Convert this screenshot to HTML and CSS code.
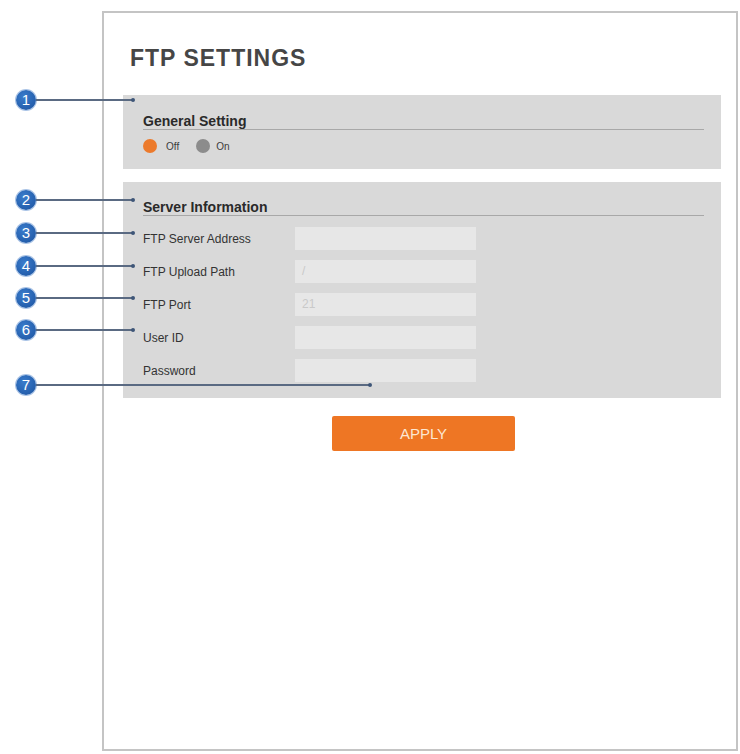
FILE: index.html
```html
<!DOCTYPE html>
<html lang="en">
<head>
<meta charset="utf-8">
<title>FTP Settings</title>
<link rel="stylesheet" href="styles.css">
</head>
<body>
<div class="frame">
  <h1 class="title">FTP SETTINGS</h1>
  <section class="panel general">
    <h2 class="heading">General Setting</h2>
    <div class="radios">
      <span class="radio checked"></span><span class="rlabel off">Off</span>
      <span class="radio"></span><span class="rlabel">On</span>
    </div>
  </section>
  <section class="panel server">
    <h2 class="heading">Server Information</h2>
    <div class="rows">
      <div class="row"><span class="label">FTP Server Address</span><div class="input"></div></div>
      <div class="row"><span class="label">FTP Upload Path</span><div class="input">/</div></div>
      <div class="row"><span class="label">FTP Port</span><div class="input">21</div></div>
      <div class="row"><span class="label">User ID</span><div class="input"></div></div>
      <div class="row"><span class="label">Password</span><div class="input"></div></div>
    </div>
  </section>
  <div class="actions"><button class="apply">APPLY</button></div>
</div>

<div class="callout c1"><span class="badge">1</span><span class="line"></span><span class="dot"></span></div>
<div class="callout c2"><span class="badge">2</span><span class="line"></span><span class="dot"></span></div>
<div class="callout c3"><span class="badge">3</span><span class="line"></span><span class="dot"></span></div>
<div class="callout c4"><span class="badge">4</span><span class="line"></span><span class="dot"></span></div>
<div class="callout c5"><span class="badge">5</span><span class="line"></span><span class="dot"></span></div>
<div class="callout c6"><span class="badge">6</span><span class="line"></span><span class="dot"></span></div>
<div class="callout c7"><span class="badge">7</span><span class="line long"></span><span class="dot"></span></div>
</body>
</html>
```
FILE: styles.css
```css
html, body {
  margin: 0;
  padding: 0;
  background: #ffffff;
}
body {
  font-family: "Liberation Sans", Arial, sans-serif;
  position: relative;
  width: 740px;
  height: 754px;
  overflow: hidden;
}
.frame {
  box-sizing: border-box;
  margin: 11px 0 0 102px;
  width: 636px;
  height: 740px;
  border: 2px solid #c4c4c4;
  padding: 32px 15px 0 19px;
}
.title {
  margin: 0 0 24px 7px;
  font-size: 23px;
  line-height: 26px;
  font-weight: bold;
  letter-spacing: 1px;
  color: #464646;
}
.panel {
  background: #d9d9d9;
  width: 598px;
  box-sizing: border-box;
}
.general {
  padding: 18px 17px 16px 20px;
  margin-bottom: 13px;
}
.server {
  padding: 17px 17px 16px 20px;
}
.heading {
  margin: 0;
  font-size: 14px;
  line-height: 16px;
  font-weight: bold;
  color: #2a2a2a;
  border-bottom: 1px solid #a8a8a8;
}
.radios {
  display: flex;
  align-items: center;
  margin-top: 9px;
  height: 14px;
}
.radio {
  width: 14px;
  height: 14px;
  border-radius: 50%;
  background: #8c8c8c;
}
.radio.checked {
  background: #ec7a2c;
}
.rlabel {
  font-size: 10px;
  color: #3c3c3c;
  margin-left: 9px;
}
.rlabel.off {
  margin-right: 17px;
}
.radio + .rlabel:last-child {
  margin-left: 6px;
}
.rows {
  margin-top: 11px;
  display: flex;
  flex-direction: column;
  gap: 10px;
}
.row {
  display: flex;
  align-items: center;
  height: 23px;
}
.label {
  width: 152px;
  font-size: 12px;
  color: #333333;
  padding-top: 1px;
}
.input {
  box-sizing: border-box;
  width: 181px;
  height: 23px;
  background: #e7e7e7;
  font-size: 12px;
  line-height: 23px;
  color: #c9c9c9;
  padding-left: 7px;
}
.actions {
  width: 598px;
  display: flex;
  justify-content: center;
  padding-left: 3px;
  box-sizing: border-box;
  margin-top: 18px;
}
.apply {
  width: 183px;
  height: 35px;
  border: none;
  border-radius: 2px;
  background: #ee7624;
  color: #fde7d2;
  font-family: "Liberation Sans", Arial, sans-serif;
  font-size: 15px;
  padding: 0;
}
.callout {
  position: absolute;
  left: 16px;
  display: flex;
  align-items: center;
  height: 20px;
}
.c1 { top: 90px; }
.c2 { top: 190px; }
.c3 { top: 223px; }
.c4 { top: 256px; }
.c5 { top: 288px; }
.c6 { top: 320px; }
.c7 { top: 375px; }
.badge {
  width: 20px;
  height: 20px;
  border-radius: 50%;
  background: radial-gradient(circle at 40% 35%, #3a7ccc, #1b529f);
  box-shadow: 0 0 0 1px #a9c3e6;
  color: #ffffff;
  font-size: 15px;
  line-height: 20px;
  text-align: center;
}
.line {
  width: 97px;
  height: 2px;
  background: #5a6a82;
}
.line.long {
  width: 334px;
}
.dot {
  width: 4px;
  height: 4px;
  border-radius: 50%;
  background: #3e5678;
  margin-left: -2px;
}
```
